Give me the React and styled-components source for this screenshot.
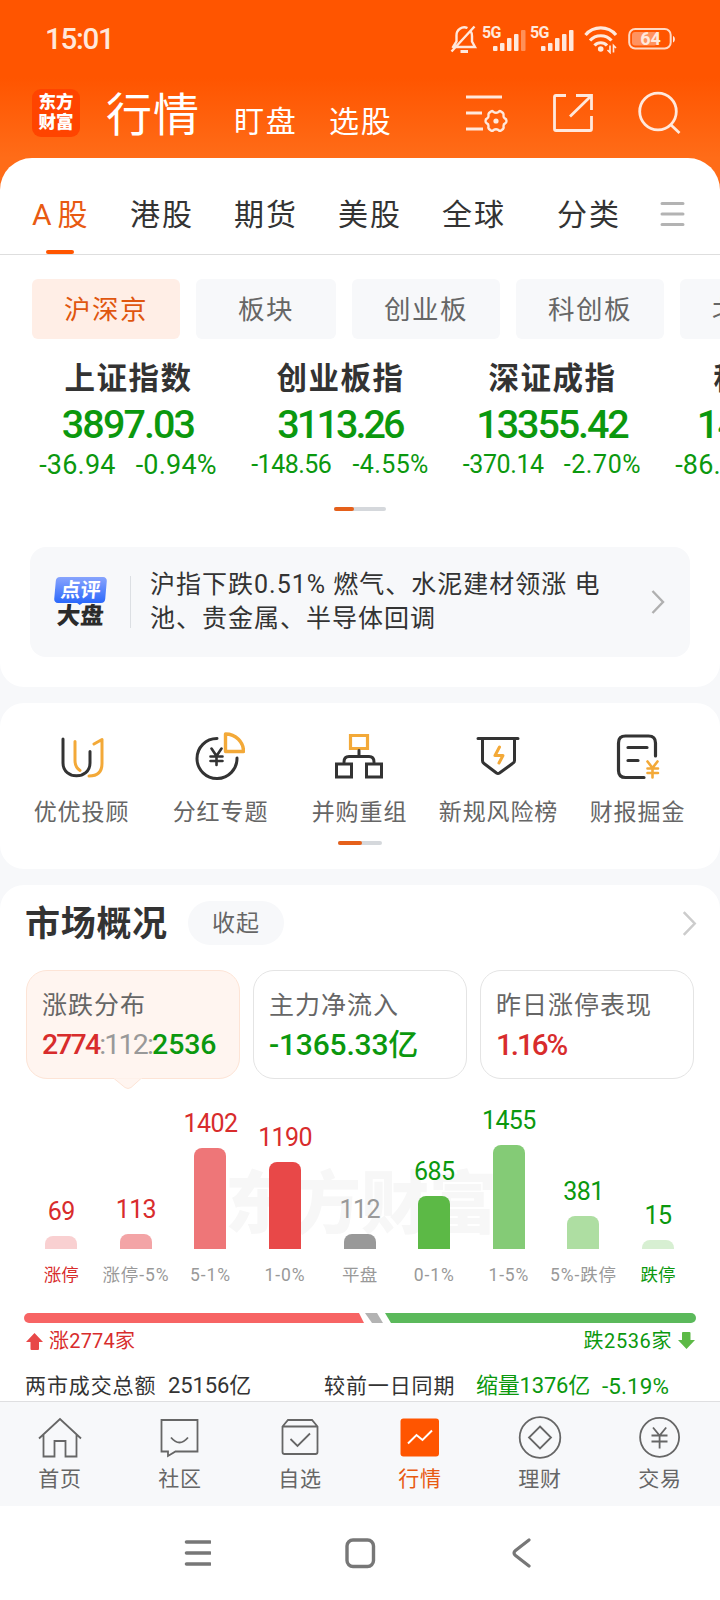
import React from "react";
import styled, { createGlobalStyle } from "styled-components";

const GlobalStyle = createGlobalStyle`
  * {
    box-sizing: border-box;
  }

  body {
    margin: 0;
    background: #fff;
    font-family: Roboto, "Noto Sans CJK SC", sans-serif;
    color: #333;
  }

  svg {
    display: block;
    flex: none;
  }
`;

const RED = "#d82c2c";
const GREEN = "#0b980e";
const GREY = "#999";

const Screen = styled.div`
  width: 720px;
  height: 1600px;
  overflow: hidden;
  display: flex;
  flex-direction: column;
  background: linear-gradient(#ff5500 0, #ff5500 78px, #ff6c18 158px, #ff6c18 210px, #f7f8fa 210px);
`;

const Num = styled.span`
  font-size: ${(p) => p.$size}px;
  letter-spacing: ${(p) => p.$ls || 0}px;
  font-weight: ${(p) => p.$weight || 400};
  color: ${(p) => p.$color || "inherit"};
  white-space: nowrap;
`;

/* status bar + header */

const StatusBar = styled.div`
  height: 78px;
  flex: none;
  display: flex;
  justify-content: space-between;
  padding: 23px 44px 0 45px;
  line-height: 33px;
  color: #ffe8dc;
`;

const StatusIcons = styled.div`
  display: flex;
  height: 31px;
  align-items: center;
`;

const Header = styled.header`
  height: 80px;
  flex: none;
  display: flex;
  padding: 0 39px 0 32px;
  color: #fff;
`;

const Logo = styled.div`
  width: 48px;
  height: 48px;
  margin-top: 11px;
  padding-top: 3px;
  border-radius: 9px;
  background: #ff4400;
  font-size: 17.5px;
  font-weight: 900;
  line-height: 20px;
  text-align: center;
`;

const HeaderTitle = styled.h1`
  margin: 0 0 0 26px;
  width: 128px;
  font-size: 46px;
  font-weight: 400;
  letter-spacing: 1px;
  line-height: 74px;
`;

const HeaderLink = styled.span`
  width: 95px;
  padding-top: 24px;
  font-size: 30px;
  letter-spacing: 1.8px;
  line-height: 40px;
  white-space: nowrap;
`;

const HeaderIcons = styled.div`
  display: flex;
  gap: 44px;
  margin-left: auto;
  padding-top: 13px;
`;

/* sheets */

const Sheet = styled.section`
  flex: none;
  background: #fff;
  height: ${(p) => p.$height}px;
  margin-bottom: 16px;
  border-radius: ${(p) => p.$radius || "24px"};
  overflow: hidden;
`;

const Tabs = styled.nav`
  height: 97px;
  display: flex;
  padding: 0 35px 0 32px;
  border-bottom: 1px solid #dedede;
`;

const Tab = styled.div`
  width: ${(p) => p.$width}px;
  font-size: 30px;
  letter-spacing: 2px;
  line-height: 113px;
  white-space: nowrap;
  color: ${(p) => (p.$active ? "#e85a12" : "#333")};
`;

const TabLetter = styled.span`
  margin-right: 4px;
`;

const TabLine = styled.div`
  width: 28px;
  height: 4px;
  margin: -21px 0 0 14px;
  border-radius: 2px;
  background: #ff5500;
`;

const MenuButton = styled.div`
  margin: 44px 0 0 auto;
`;

const Pills = styled.div`
  display: flex;
  gap: 16px;
  padding: 24px 0 0 32px;
`;

const Pill = styled.div`
  flex: none;
  width: ${(p) => p.$width || 148}px;
  height: 60px;
  border-radius: 6px;
  text-align: center;
  font-size: 26.5px;
  letter-spacing: 1.5px;
  line-height: 61px;
  background: ${(p) => (p.$active ? "#ffeee6" : "#f7f8fa")};
  color: ${(p) => (p.$active ? "#e0560f" : "#666")};
`;

const Indexes = styled.div`
  display: flex;
  padding: 16px 0 0 22px;
`;

const IndexItem = styled.div`
  flex: none;
  width: 212px;
  display: flex;
  flex-direction: column;
  align-items: center;
`;

const IndexName = styled.div`
  font-size: 30.5px;
  font-weight: 700;
  letter-spacing: 1.5px;
  text-indent: 1px;
  line-height: 47px;
`;

const IndexValue = styled.div`
  display: flex;
  height: 45px;
  line-height: 46px;
  color: ${GREEN};
`;

const IndexChange = styled.div`
  display: flex;
  gap: ${(p) => p.$gap}px;
  height: 31px;
  line-height: 36px;
  color: ${GREEN};
`;

const Pager = styled.div`
  width: ${(p) => p.$width}px;
  height: 4px;
  margin: ${(p) => p.$top}px auto 0;
  border-radius: 2px;
  background: #d5d8dc;

  &::before {
    content: "";
    display: block;
    width: ${(p) => p.$on}px;
    height: 4px;
    border-radius: 2px;
    background: #e5601a;
  }
`;

const Comment = styled.div`
  display: flex;
  align-items: center;
  height: 110px;
  margin: 36px 30px 0;
  padding: 0 25px 0 23px;
  border-radius: 16px;
  background: #f7f8fa;
`;

const CommentBadge = styled.div`
  width: 54px;
  display: flex;
  flex-direction: column;
  align-items: center;
`;

const BadgeTop = styled.div`
  position: relative;
  width: 51px;
  height: 26px;
  border-radius: 4px;
  transform: skewX(-5deg);
  background: linear-gradient(#88a4fd, #2b68fb);
  color: #fff;
  font-size: 20px;
  font-weight: 700;
  line-height: 27px;
  text-align: center;

  &::after {
    content: "";
    position: absolute;
    left: 22px;
    top: 25px;
    border: 4px solid transparent;
    border-top: 3px solid #2b68fb;
  }
`;

const BadgeBottom = styled.div`
  height: 24px;
  font-size: 23.5px;
  font-weight: 900;
  line-height: 27px;
  color: #2b2b2b;
  transform: skewX(-4deg);
`;

const CommentText = styled.p`
  flex: 1;
  margin: 0 0 0 23px;
  padding-left: 19px;
  border-left: 1px solid #dcdfe3;
  height: 52px;
  display: flex;
  flex-direction: column;
  justify-content: center;
  font-size: 25px;
  letter-spacing: 1px;
  line-height: 34px;
  white-space: nowrap;
`;

const Shortcuts = styled.div`
  display: flex;
  padding: 28px 0 0 12px;
`;

const Shortcut = styled.div`
  width: 139px;
  display: flex;
  flex-direction: column;
  align-items: center;
  font-size: 23px;
  letter-spacing: 0.9px;
  line-height: 34px;
  color: #666;
  white-space: nowrap;

  svg {
    margin: 0 2px 15px 0;
  }
`;

const OverviewHead = styled.div`
  display: flex;
  align-items: center;
  height: 76px;
  padding: 0 23px 0 25px;
`;

const OverviewTitle = styled.h2`
  margin: 0;
  width: 163px;
  padding-top: 3px;
  font-size: 35px;
  font-weight: 700;
  letter-spacing: 0.7px;
  line-height: 50px;
  white-space: nowrap;
`;

const Fold = styled.div`
  width: 96px;
  height: 44px;
  margin-right: auto;
  border-radius: 22px;
  background: #f7f8fa;
  color: #666;
  text-align: center;
  font-size: 23px;
  letter-spacing: 1px;
  line-height: 45px;
`;

const Cards = styled.div`
  display: flex;
  gap: 13px;
  padding: 9px 26px 0;
`;

const Card = styled.div`
  position: relative;
  width: 214px;
  height: 109px;
  padding: 16px 0 0 15px;
  border-radius: 21px;
  border: 1px solid ${(p) => (p.$active ? "#fde4d6" : "#e4e4e4")};
  background: ${(p) => (p.$active ? "#fff5f0" : "#fff")};
  white-space: nowrap;
`;

const CardPointer = styled.svg`
  position: absolute;
  left: 86px;
  top: 106px;
`;

const CardLabel = styled.div`
  font-size: 25px;
  letter-spacing: 1px;
  line-height: 37px;
  color: #666;
`;

const CardValue = styled.div`
  line-height: 42px;
`;

const Chart = styled.div`
  position: relative;
  display: flex;
  height: 170px;
  padding-left: 24px;
`;

const Watermark = styled.div`
  position: absolute;
  left: 225px;
  top: 76px;
  font-size: 68px;
  font-weight: 900;
  line-height: 100px;
  color: #f7f7f7;
`;

const Column = styled.div`
  position: relative;
  width: 74.6px;
  display: flex;
  flex-direction: column;
  justify-content: flex-end;
  align-items: center;
`;

const Bar = styled.div`
  width: 32px;
  height: ${(p) => p.$height}px;
  margin-top: 10px;
  border-radius: 8px 8px 0 0;
  background: ${(p) => p.$color};
`;

const AxisLabels = styled.div`
  display: flex;
  padding: 12px 0 0 24px;
  height: 40px;
  line-height: 28px;
`;

const AxisLabel = styled.div`
  width: 74.6px;
  display: flex;
  justify-content: center;
`;

const Ratio = styled.div`
  display: flex;
  height: 10px;
  margin: 24px 24px 0;
`;

const RatioPart = styled.div`
  width: ${(p) => p.$width}px;
  margin-left: ${(p) => p.$offset || 0}px;
  border-radius: ${(p) => p.$radius || 0};
  background: ${(p) => p.$color};
  clip-path: ${(p) => p.$clip};
`;

const RatioLegend = styled.div`
  display: flex;
  justify-content: space-between;
  height: 34px;
  padding: 2px 25px 0 26px;
  line-height: 36px;
`;

const LegendItem = styled.div`
  display: flex;
  align-items: center;
  gap: 6px;
`;

const Turnover = styled.div`
  display: flex;
  padding: 12px 0 0 25px;
  line-height: 34px;
`;

const Cell = styled.div`
  width: ${(p) => p.$width}px;
`;

const Overview = styled(Sheet)`
  margin-bottom: 0;
`;

/* bottom */

const BottomNav = styled.nav`
  flex: none;
  display: flex;
  height: 105px;
  border-top: 1px solid #dfdfe1;
  background: #f7f8fa;
`;

const NavItem = styled.div`
  width: 120px;
  padding-top: 13px;
  display: flex;
  flex-direction: column;
  align-items: center;
  font-size: 21px;
  letter-spacing: 0.7px;
  line-height: 40px;
  color: ${(p) => (p.$active ? "#e85a12" : "#666")};
`;

const SystemNav = styled.div`
  flex: 1;
  display: flex;
  gap: 131px;
  padding: 30px 0 0 184px;
  background: #fff;
`;

const Chevron = ({ width, height, color }) => (
  <svg width={width} height={height} viewBox="0 0 14 24" fill="none" stroke={color} strokeWidth="2.4">
    <path d="M1.5 1 12 12 1.5 23" />
  </svg>
);

const Signal = ({ weak }) => (
  <svg width="48" height="30" viewBox="0 0 48 30" fill="#ffe8dc">
    <text x="0" y="14" fontSize="16" fontWeight="700" letterSpacing="-0.6" fontFamily="Roboto">
      5G
    </text>
    <rect x="11" y="22" width="4.500" height="5" rx="1" />
    <rect x="18" y="19" width="4.500" height="8" rx="1" />
    <rect x="25" y="14" width="4.500" height="13" rx="1" />
    <rect x="32" y="10" width="4.500" height="17" rx="1" />
    <rect x="39" y="6" width="4.500" height="21" rx="1" opacity={weak ? 0.4 : 1} />
  </svg>
);

const StatusGlyphs = () => (
  <StatusIcons>
    <svg width="32" height="32" viewBox="0 0 32 32" fill="none" stroke="#ffe8dc" strokeWidth="2.4">
      <path d="M6 24h19l-3-5.500V13a8 8 0 0 0-1.500-5M17.500 5A7.800 7.800 0 0 0 6.500 12.500v6L2.500 25M1.500 28.500 24.500 3.500" />
      <path d="M10.500 28.500h7.500" strokeWidth="3" />
    </svg>
    <Signal weak />
    <Signal />
    <svg width="50" height="30" viewBox="-5 0 50 30" fill="none" stroke="#ffe8dc" strokeWidth="3.2">
      <path d="M2.500 11a20 20 0 0 1 30.500 0M7 16.500a14.500 14.500 0 0 1 21.500 0M11.500 21.500a8.500 8.500 0 0 1 12.500 0" />
      <circle cx="17.700" cy="25" r="2.800" fill="#ffe8dc" stroke="none" />
      <path d="M27 21.500v7l-2.500-2.500M30.500 28.500v-7l2.500 2.500" strokeWidth="1.600" />
    </svg>
    <svg width="48" height="24" viewBox="0 0 48 24">
      <rect x="1.200" y="2" width="41.500" height="19.500" rx="6" fill="none" stroke="#ffd9c4" strokeWidth="2" />
      <rect x="4" y="5" width="25" height="13.500" rx="3" fill="#ff9360" />
      <path d="M45 9v6.500c2.500-.5 2.500-6 0-6.500z" fill="#ffe8dc" />
      <text x="22.500" y="18" fontSize="18" fontWeight="700" textAnchor="middle" fill="#ffe8dc" fontFamily="Roboto">
        64
      </text>
    </svg>
  </StatusIcons>
);

const SHORTCUTS = [
  {
    name: "优优投顾",
    icon: (
      <>
        <path stroke="#333" d="M7 8v24c0 17 27 17 27 0V20.500" />
        <path stroke="#f3a938" d="M19 10.500v19c0 5 2 8 5 10M38 13l8-4.500v24c0 9-5 12.500-13 12.500" />
      </>
    ),
  },
  {
    name: "分红专题",
    icon: (
      <>
        <path stroke="#333" d="M22 7.500a20 20 0 1 0 20 19.500" />
        <path stroke="#333" strokeWidth="2.6" d="m16.500 17.500 5 7.500 5-7.500M21.500 25v9M15.500 25.500h12M15.500 30h12" />
        <path stroke="#f3a938" strokeWidth="3.4" d="M30.500 3v17.500h18C48.500 11 41 3 30.500 3z" />
      </>
    ),
  },
  {
    name: "并购重组",
    icon: (
      <>
        <path stroke="#f3a938" strokeWidth="3.2" strokeLinejoin="miter" d="M16.500 4.500h17v13h-17z" />
        <path stroke="#333" strokeLinejoin="miter" d="M25 19.500v6M10 31q0-5.500 5-5.500h20q5 0 5 5.500M2.500 33h15v13h-15zM32.500 33h15v13h-15z" />
      </>
    ),
  },
  {
    name: "新规风险榜",
    icon: (
      <>
        <path stroke="#333" d="M5 7.500h40M9.500 7.500v22q0 2 1.500 3l12.500 9.500q1.500 1 3 0L39.500 32.500q2-1 2-3v-22" />
        <path stroke="#f3a938" d="m26.500 16-4.500 8.500h8L26 32" />
      </>
    ),
  },
  {
    name: "财报掘金",
    icon: (
      <>
        <path stroke="#333" strokeWidth="3.2" d="M32 46.500H13.500q-7 0-7-7V12q0-7 7-7h23q7 0 7 7v13M16 16.500h19M16 29.500h10" />
        <path stroke="#f3a938" strokeWidth="2.6" d="m35.500 30.500 5 6.500 5-6.500M40.500 37v9.500M35.500 37.500H46M35.500 42H46" />
      </>
    ),
  },
];

const INDEXES = [
  { name: "上证指数", value: "3897.03", diff: "-36.94", rate: "-0.94%", size: 27, gap: 20, ls: [-1.9, 0.2, 0.2] },
  { name: "创业板指", value: "3113.26", diff: "-148.56", rate: "-4.55%", size: 25, gap: 21, ls: [-2.9, -0.5, 0.4] },
  { name: "深证成指", value: "13355.42", diff: "-370.14", rate: "-2.70%", size: 25, gap: 20, ls: [-2.1, -0.4, 0.6] },
  { name: "科创50", value: "1461.72", diff: "-86.21", rate: "-5.57%", size: 27, gap: 20, ls: [-1.6, 0.2, 0.2] },
];

const BARS = [
  { label: "涨停", count: "69", height: 13, color: "#f9d0d1", text: RED, labelColor: RED },
  { label: "涨停-5%", count: "113", height: 15.5, color: "#f3a4a6", text: RED, ls: 0.9 },
  { label: "5-1%", count: "1402", height: 101, color: "#ee7678", text: RED, ls: 0.9 },
  { label: "1-0%", count: "1190", height: 87, color: "#e84848", text: RED, ls: 0.9 },
  { label: "平盘", count: "112", height: 15, color: "#999", text: GREY },
  { label: "0-1%", count: "685", height: 53, color: "#5cb946", text: GREEN, ls: 0.9 },
  { label: "1-5%", count: "1455", height: 104, color: "#84cb76", text: GREEN, ls: 0.9 },
  { label: "5%-跌停", count: "381", height: 33, color: "#aedea2", text: GREEN, ls: 0.9 },
  { label: "跌停", count: "15", height: 9, color: "#d7efd2", text: GREEN, labelColor: GREEN },
];

const NAV = [
  {
    name: "首页",
    icon: <path d="M1 23.500 22 4l21 19.500M5.500 20v21.500h11V26h11v15.500h11V20" />,
  },
  {
    name: "社区",
    icon: <path d="M3.500 5h36v31.500H17.500l-7.500 4.500v-4.500H3.500zM13 22.500q8.500 10 17 0" />,
  },
  {
    name: "自选",
    icon: <path d="M4.500 11.500 10 5h24l5.500 6.500V37q0 2-2 2h-31q-2 0-2-2zh35M12.500 24l7 7L32 18.500" />,
  },
  {
    name: "行情",
    active: true,
    icon: (
      <>
        <rect x="2.500" y="3.500" width="38.500" height="38" rx="3" fill="#ff5500" stroke="none" />
        <path stroke="#fff" strokeWidth="2" d="m10 28.500 8.500-8.500 6 5L34 15.500" />
      </>
    ),
  },
  {
    name: "理财",
    icon: (
      <>
        <circle cx="22" cy="22.500" r="20.300" />
        <path d="m22 11.500 11 11-11 11-11-11z" />
      </>
    ),
  },
  {
    name: "交易",
    icon: (
      <>
        <circle cx="21.600" cy="22.300" r="19.500" />
        <path d="m15 12.500 6.600 8 6.600-8M21.600 20.500v13M13.500 20.500h16M13.500 26.500h16" />
      </>
    ),
  },
];

const App = () => {
  return (
    <Screen>
      <GlobalStyle />
      <StatusBar>
        <Num $size={29.5} $ls={-1.3} $weight={500}>
          15:01
        </Num>
        <StatusGlyphs />
      </StatusBar>

      <Header>
        <Logo>
          东方
          <br />
          财富
        </Logo>
        <HeaderTitle>行情</HeaderTitle>
        <HeaderLink>盯盘</HeaderLink>
        <HeaderLink>选股</HeaderLink>
        <HeaderIcons>
          <svg width="43" height="44" viewBox="0 0 43 44" fill="none" stroke="#ffe8dc" strokeWidth="2.8">
            <path d="M1 6h36M1 22h16M1 38h17" />
            <path
              d="M26 20.500q1.500-1 2.500.5 2.500 1.500 5 0 1-1.500 2.500-.5l2 1.500q1 1.500.5 3 0 2 1.500 2.500 1.500.500 1.500 2.500t-1.500 2.500q-1.500.500-1.500 2.500.500 1.500-.5 3l-2 1.500q-1.500 1-2.500-.5-2.500-1.500-5 0-1 1.500-2.500.5l-2-1.500q-1-1.500-.5-3 0-2-1.500-2.500-1.500-.5-1.500-2.500t1.500-2.500q1.500-.5 1.500-2.500-.5-1.500.5-3z"
              strokeWidth="2.4"
              strokeLinejoin="round"
            />
            <circle cx="31" cy="30" r="2.600" fill="#ffe8dc" stroke="none" />
          </svg>
          <svg width="41" height="44" viewBox="0 0 41 44" fill="none" stroke="#ffe8dc" strokeWidth="2.8">
            <path d="M14 4.500H4q-1.500 0-1.500 1.500v32q0 1.500 1.500 1.500h34q1.500 0 1.500-1.500V25M24 4.500h15.500V19M38.500 5.500 18 25.500" />
          </svg>
          <svg width="44" height="44" viewBox="0 0 44 44" fill="none" stroke="#ffe8dc" strokeWidth="2.8">
            <circle cx="21" cy="20.500" r="18.300" />
            <path d="m33.500 33.500 9 8.500" />
          </svg>
        </HeaderIcons>
      </Header>

      <Sheet $height={529} $radius="32px 32px 24px 24px">
        <Tabs>
          <Tab $width={98} $active>
            <TabLetter>A</TabLetter>股
            <TabLine />
          </Tab>
          <Tab $width={104}>港股</Tab>
          <Tab $width={104}>期货</Tab>
          <Tab $width={104}>美股</Tab>
          <Tab $width={115}>全球</Tab>
          <Tab $width={70}>分类</Tab>
          <MenuButton>
            <svg width="25" height="25" viewBox="0 0 25 25" stroke="#b3b3b3" strokeWidth="3" strokeLinecap="round">
              <path d="M2 1.500h21M2 12h21M2 22.500h21" />
            </svg>
          </MenuButton>
        </Tabs>
        <Pills>
          <Pill $active>沪深京</Pill>
          <Pill $width={140}>板块</Pill>
          <Pill>创业板</Pill>
          <Pill>科创板</Pill>
          <Pill>北交所</Pill>
        </Pills>
        <Indexes>
          {INDEXES.map((item) => (
            <IndexItem key={item.name}>
              <IndexName>{item.name}</IndexName>
              <IndexValue>
                <Num $size={39.5} $ls={item.ls[0]} $weight={500}>
                  {item.value}
                </Num>
              </IndexValue>
              <IndexChange $gap={item.gap}>
                <Num $size={item.size} $ls={item.ls[1]}>
                  {item.diff}
                </Num>
                <Num $size={item.size} $ls={item.ls[2]}>
                  {item.rate}
                </Num>
              </IndexChange>
            </IndexItem>
          ))}
        </Indexes>
        <Pager $width={52} $on={20} $top={29} />
        <Comment>
          <CommentBadge>
            <BadgeTop>点评</BadgeTop>
            <BadgeBottom>大盘</BadgeBottom>
          </CommentBadge>
          <CommentText>
            <span>沪指下跌0.51% 燃气、水泥建材领涨 电</span>
            <span>池、贵金属、半导体回调</span>
          </CommentText>
          <Chevron width={14} height={24} color="#b0b0b0" />
        </Comment>
      </Sheet>

      <Sheet $height={166}>
        <Shortcuts>
          {SHORTCUTS.map((item) => (
            <Shortcut key={item.name}>
              <svg width="50" height="50" viewBox="0 0 50 50" fill="none" strokeWidth="3" strokeLinecap="round" strokeLinejoin="round">
                {item.icon}
              </svg>
              {item.name}
            </Shortcut>
          ))}
        </Shortcuts>
        <Pager $width={44} $on={24} $top={11} />
      </Sheet>

      <Overview $height={516} $radius="24px 24px 0 0">
        <OverviewHead>
          <OverviewTitle>市场概况</OverviewTitle>
          <Fold>收起</Fold>
          <Chevron width={15} height={25} color="#ccc" />
        </OverviewHead>
        <Cards>
          <Card $active>
            <CardLabel>涨跌分布</CardLabel>
            <CardValue>
              <Num $size={28.5} $ls={-1.9} $weight={500} $color={RED}>
                2774
              </Num>
              <Num $size={28.5} $ls={-1.8} $color={GREY}>
                :112:
              </Num>
              <Num $size={28.5} $ls={-0.1} $weight={500} $color={GREEN}>
                2536
              </Num>
            </CardValue>
            <CardPointer width="30" height="14" viewBox="0 0 30 14">
              <path d="M1 1.500 12 10.500q3 2 6 0L28 1.500" fill="#fff5f0" stroke="#fde4d6" />
              <path d="M1 0h28v1.500H1z" fill="#fff5f0" />
            </CardPointer>
          </Card>
          <Card>
            <CardLabel>主力净流入</CardLabel>
            <CardValue>
              <Num $size={30} $ls={-0.2} $weight={500} $color={GREEN}>
                -1365.33亿
              </Num>
            </CardValue>
          </Card>
          <Card>
            <CardLabel>昨日涨停表现</CardLabel>
            <CardValue>
              <Num $size={29.5} $ls={-2} $weight={500} $color={RED}>
                1.16%
              </Num>
            </CardValue>
          </Card>
        </Cards>
        <Chart>
          <Watermark>东方财富</Watermark>
          {BARS.map((bar) => (
            <Column key={bar.label}>
              <Num $size={25} $ls={-0.6} $color={bar.text}>
                {bar.count}
              </Num>
              <Bar $height={bar.height} $color={bar.color} />
            </Column>
          ))}
        </Chart>
        <AxisLabels>
          {BARS.map((bar) => (
            <AxisLabel key={bar.label}>
              <Num $size={17.5} $ls={bar.ls || 0.1} $color={bar.labelColor || GREY}>
                {bar.label}
              </Num>
            </AxisLabel>
          ))}
        </AxisLabels>
        <Ratio>
          <RatioPart $width={340} $color="#f76464" $radius="5px 0 0 5px" $clip="polygon(0 0, 335px 0, 100% 100%, 0 100%)" />
          <RatioPart $width={18} $offset={1} $color="#b3b3b3" $clip="polygon(0 0, 12px 0, 100% 100%, 7px 100%)" />
          <RatioPart $width={311} $offset={2} $color="#5bb95b" $radius="0 5px 5px 0" $clip="polygon(0 0, 100% 0, 100% 100%, 6px 100%)" />
        </Ratio>
        <RatioLegend>
          <LegendItem>
            <svg width="17" height="18" viewBox="0 0 17 18" fill="#e84848">
              <path d="M8.500 1 17 10h-4v7q0 1-1 1H5.500q-1 0-1-1v-7H0z" />
            </svg>
            <Num $size={20} $ls={0.2} $color={RED}>
              涨2774家
            </Num>
          </LegendItem>
          <LegendItem>
            <Num $size={20} $ls={0.6} $color={GREEN}>
              跌2536家
            </Num>
            <svg width="17" height="18" viewBox="0 0 17 18" fill="#5cb946">
              <path d="M8.500 17 0 8h4V1q0-1 1-1h6.500q1 0 1 1v7H17z" />
            </svg>
          </LegendItem>
        </RatioLegend>
        <Turnover>
          <Cell $width={143}>
            <Num $size={21} $ls={0.9}>
              两市成交总额
            </Num>
          </Cell>
          <Cell $width={156}>
            <Num $size={22} $ls={-0.1}>
              25156亿
            </Num>
          </Cell>
          <Cell $width={152}>
            <Num $size={21} $ls={0.9}>
              较前一日同期
            </Num>
          </Cell>
          <Cell $width={126}>
            <Num $size={22} $ls={-0.2} $color={GREEN}>
              缩量1376亿
            </Num>
          </Cell>
          <Num $size={22.5} $ls={0.1} $color={GREEN}>
            -5.19%
          </Num>
        </Turnover>
      </Overview>

      <BottomNav>
        {NAV.map((item) => (
          <NavItem key={item.name} $active={item.active}>
            <svg width="44" height="44" viewBox="0 0 44 44" fill="none" stroke="#666" strokeWidth="1.8">
              {item.icon}
            </svg>
            {item.name}
          </NavItem>
        ))}
      </BottomNav>
      <SystemNav>
        <svg width="27" height="32" viewBox="0 0 27 32" stroke="#777" strokeWidth="3.6" strokeLinecap="round">
          <path d="M2.500 6H26M2.500 17H26M2.500 28H26" />
        </svg>
        <svg width="36" height="34" viewBox="0 0 36 34" fill="none" stroke="#777" strokeWidth="3.4">
          <rect x="5" y="4" width="26.500" height="26.500" rx="6" />
        </svg>
        <svg width="22" height="34" viewBox="0 0 22 34" fill="none" stroke="#777" strokeWidth="3.2" strokeLinecap="round">
          <path d="M20 4 6.500 14.500q-3 2.500 0 5L20 30" />
        </svg>
      </SystemNav>
    </Screen>
  );
};

export default App;
